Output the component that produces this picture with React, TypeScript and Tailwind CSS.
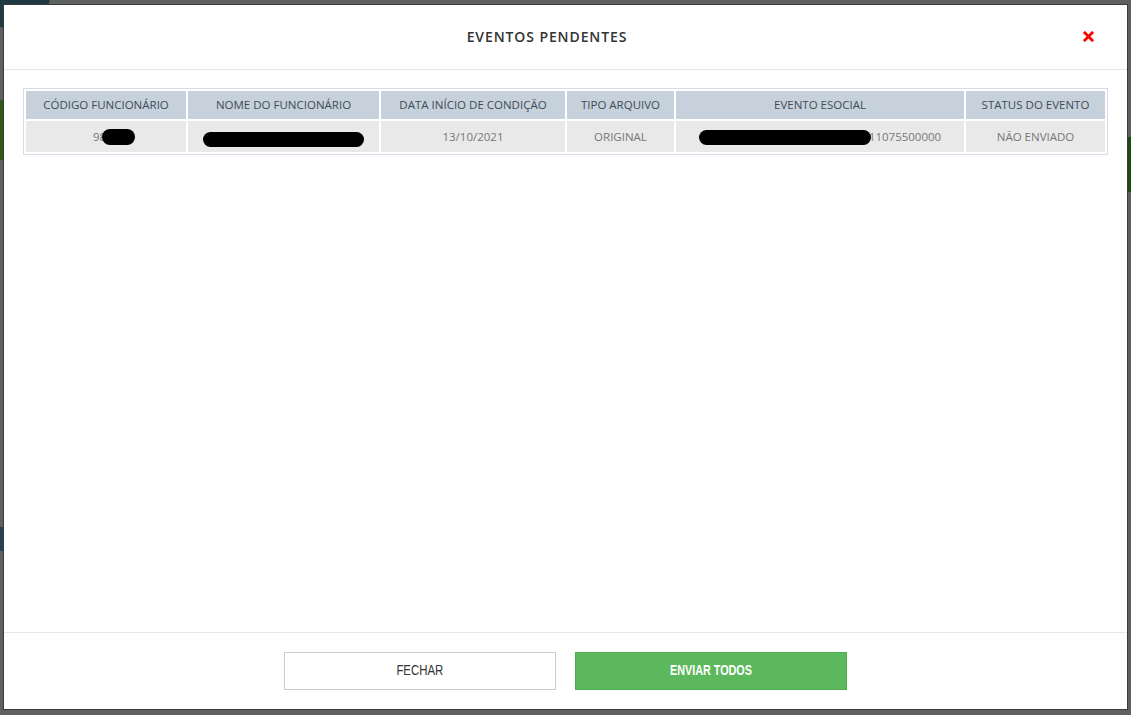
import { useState } from 'react'

type Row = {
  codigo: string
  data: string
  tipo: string
  evento: string
  status: string
}

const rows: Row[] = [
  {
    codigo: '98',
    data: '13/10/2021',
    tipo: 'ORIGINAL',
    evento: '11075500000',
    status: 'NÃO ENVIADO',
  },
]

const columns = [
  { label: 'CÓDIGO FUNCIONÁRIO', w: 'w-[160px]' },
  { label: 'NOME DO FUNCIONÁRIO', w: 'w-[191px]' },
  { label: 'DATA INÍCIO DE CONDIÇÃO', w: 'w-[184px]' },
  { label: 'TIPO ARQUIVO', w: 'w-[107px]' },
  { label: 'EVENTO ESOCIAL', w: 'w-[288px]' },
  { label: 'STATUS DO EVENTO', w: 'w-[139px]' },
]

// redaction marks drawn over personal data
function Blot({ className }: { className: string }) {
  return <span className={`inline-block bg-black rounded-full align-middle ${className}`} />
}

export default function App() {
  const [open] = useState(true)

  return (
    <div className="relative w-[1131px] h-[715px] overflow-hidden bg-[#5e6061] font-['Open_Sans',sans-serif] flex items-start pt-[5px] pl-[4px]">
      {/* dimmed page behind the modal */}
      <div className="absolute left-[-20px] top-[-40px] w-[70px] h-[70px] rounded-full bg-[#1f3a44]" />
      <div className="absolute left-0 top-[100px] w-[4px] h-[60px] bg-[#2f5a12]" />
      <div className="absolute right-0 top-[137px] w-[4px] h-[55px] bg-[#1f4a12]" />
      <div className="absolute left-0 top-[527px] w-[4px] h-[24px] bg-[#25415a]" />

      {open && (
        <div className="relative w-[1123px] h-[704px] bg-white flex flex-col shadow-[0_0_0_1px_#3a3a3a]">
          {/* header */}
          <div className="h-[65px] shrink-0 flex items-center pl-[8px] pr-[33px] pb-[2px] border-b border-[#e3e6ea]">
            <h2 className="flex-1 text-center text-[14px] font-semibold tracking-[0.9px] text-[#333]">EVENTOS PENDENTES</h2>
            <button className="w-[12px] h-[12px] flex items-center justify-center">
              <svg viewBox="0 0 12 12" width="11" height="11">
                <path d="M2 2 L10 10 M10 2 L2 10" stroke="#ff0000" strokeWidth="3" strokeLinecap="square" />
              </svg>
            </button>
          </div>

          {/* body */}
          <div className="flex-1 px-[19px] pt-[18px]">
            <table className="border border-[#d6dde8] border-separate border-spacing-[2px] text-[11.5px] w-[1085px]">
              <thead>
                <tr>
                  {columns.map((c) => (
                    <th key={c.label} className={`${c.w} h-[28px] bg-[#c6d1db] font-normal text-[#3f4b59] text-center`}>
                      {c.label}
                    </th>
                  ))}
                </tr>
              </thead>
              <tbody>
                {rows.map((r, i) => (
                  <tr key={i} className="text-[#777] text-center">
                    <td className="h-[31px] bg-[#e9e9e9] pl-[16px]">
                      {r.codigo}
                      <Blot className="w-[33px] h-[16px] -ml-[4px]" />
                    </td>
                    <td className="bg-[#e9e9e9]">
                      <Blot className="w-[161px] h-[15px] mt-[5px]" />
                    </td>
                    <td className="bg-[#e9e9e9]">{r.data}</td>
                    <td className="bg-[#e9e9e9]">{r.tipo}</td>
                    <td className="bg-[#e9e9e9]">
                      <Blot className="w-[172px] h-[15px] -mr-[2px]" />
                      {r.evento}
                    </td>
                    <td className="bg-[#e9e9e9]">{r.status}</td>
                  </tr>
                ))}
              </tbody>
            </table>
          </div>

          {/* footer */}
          <div className="h-[77px] shrink-0 border-t border-[#e3e6ea] flex items-center justify-center gap-[19px] pb-[1px]">
            <button className="w-[272px] h-[38px] bg-white border border-[#cccccc] text-[#333] text-[15px] font-['Liberation_Sans',sans-serif]">
              <span className="inline-block scale-x-[0.76]">FECHAR</span>
            </button>
            <button className="w-[272px] h-[38px] bg-[#5cb85c] border border-[#4cae4c] text-white text-[15px] font-bold font-['Liberation_Sans',sans-serif]">
              <span className="inline-block scale-x-[0.72]">ENVIAR TODOS</span>
            </button>
          </div>
        </div>
      )}
    </div>
  )
}
